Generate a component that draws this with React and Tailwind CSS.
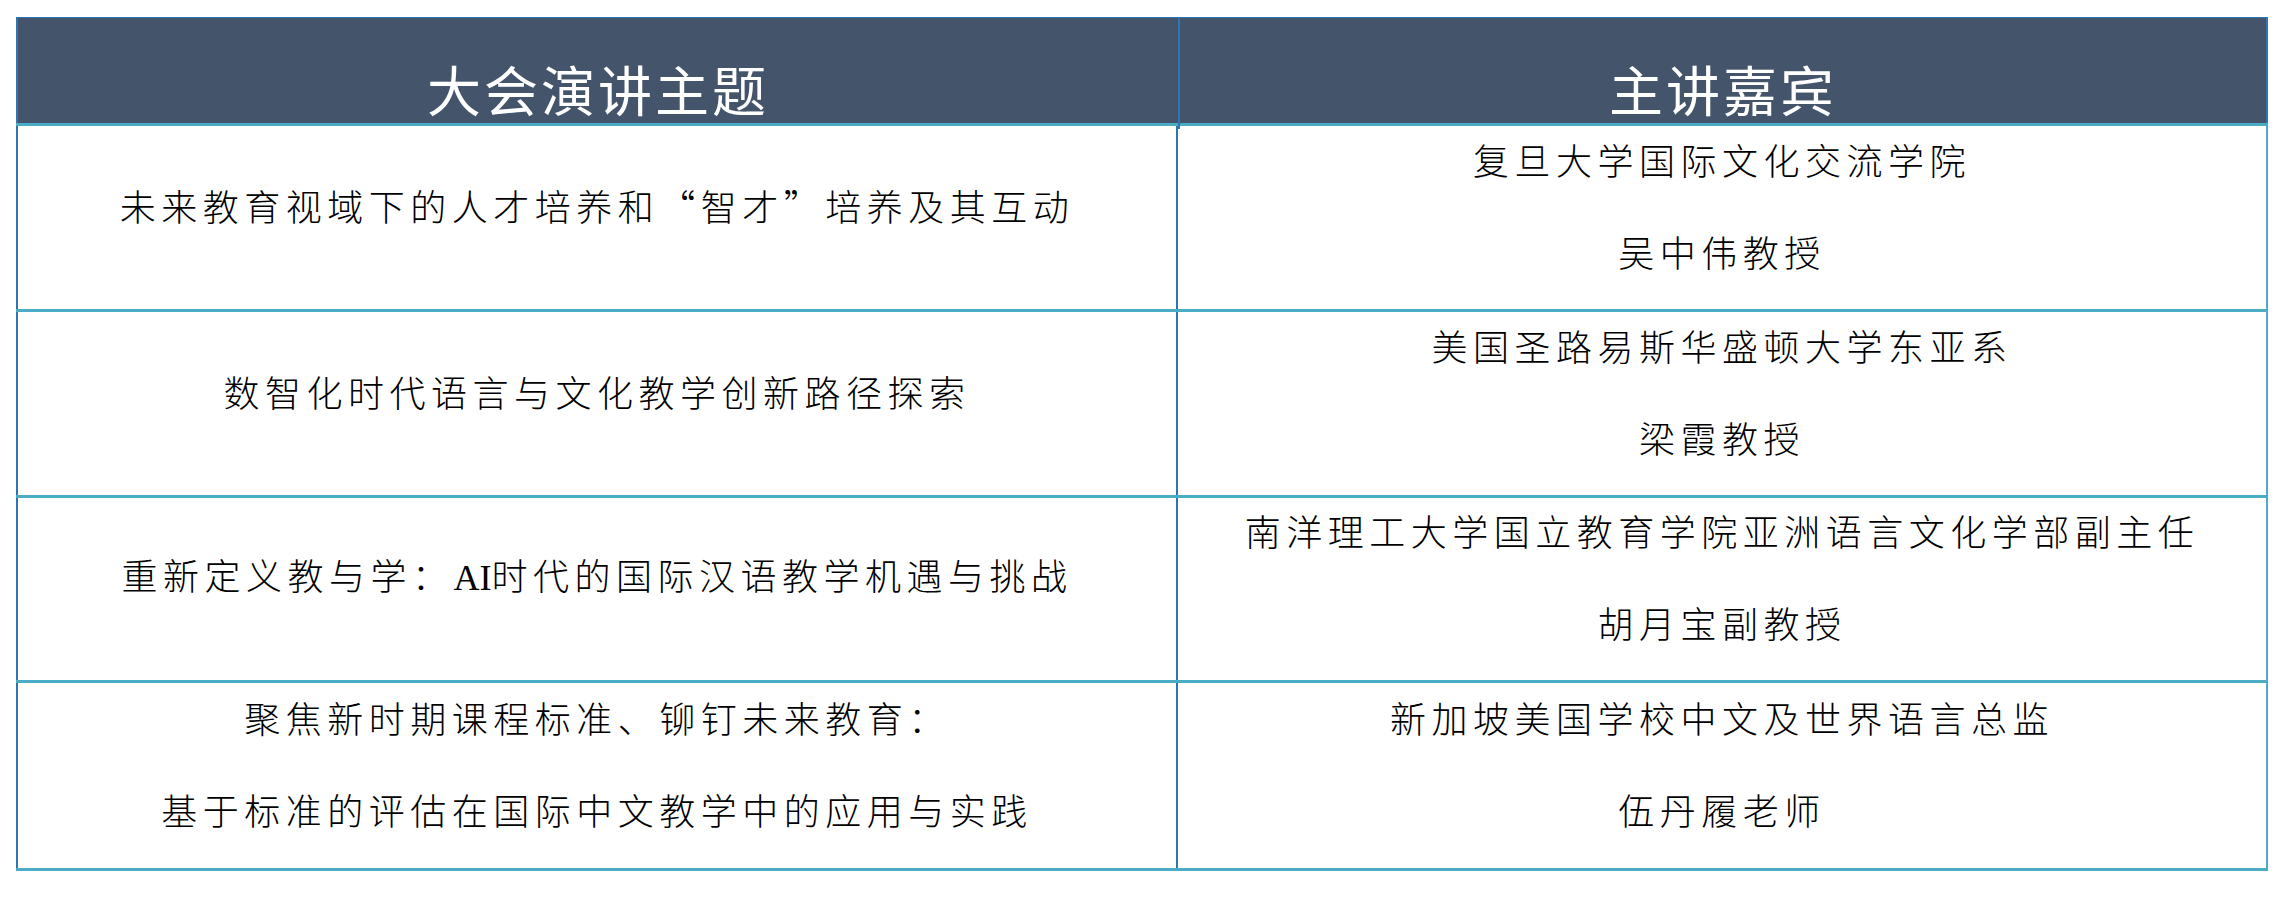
const rows = [
  {
    topic: ["未来教育视域下的人才培养和“智才”培养及其互动"],
    speaker: ["复旦大学国际文化交流学院", "吴中伟教授"],
    h: "h-[186px]",
  },
  {
    topic: ["数智化时代语言与文化教学创新路径探索"],
    speaker: ["美国圣路易斯华盛顿大学东亚系", "梁霞教授"],
    h: "h-[186px]",
  },
  {
    topic: [
      <>
        重新定义教与学：
        <span className="tracking-normal" style={{ fontFamily: '"Liberation Serif", serif' }}>
          AI
        </span>
        时代的国际汉语教学机遇与挑战
      </>,
    ],
    speaker: ["南洋理工大学国立教育学院亚洲语言文化学部副主任", "胡月宝副教授"],
    h: "h-[185px]",
  },
  {
    topic: ["聚焦新时期课程标准、铆钉未来教育：", "基于标准的评估在国际中文教学中的应用与实践"],
    speaker: ["新加坡美国学校中文及世界语言总监", "伍丹履老师"],
    h: "h-[191px]",
  },
];

const Cell = ({ lines, className = "" }) => (
  <div className={`min-h-0 flex flex-col items-center justify-center pb-[26px] ${className}`}>
    {lines.map((l, i) => (
      <p key={i} className="shrink-0 leading-[92px] whitespace-nowrap tracking-[5.5px]">
        {l}
      </p>
    ))}
  </div>
);

export default function App() {
  return (
    <div
      className="min-h-[908px] bg-white pt-[17px] pl-[16px] text-black"
      style={{ fontFamily: '"Noto Sans CJK SC", "Liberation Serif", serif' }}
    >
      <div className="w-[2252px]">
        {/* header */}
        <div className="grid grid-cols-[1162px_1fr] h-[106px] bg-[#44546a] border-t border-l-2 border-r-2 border-[#2e75b6] text-white text-[54px] tracking-[3px]">
          <div className="flex items-center justify-center pt-[30px] border-r-2 border-[#2e75b6]">
            大会演讲主题
          </div>
          <div className="flex items-center justify-center pt-[30px]">主讲嘉宾</div>
        </div>

        {/* body rows */}
        {rows.map((r, i) => (
          <div
            key={i}
            className={`grid grid-cols-[1162px_1fr] grid-rows-1 ${r.h} border-t-[3px] border-[#4bacc6] border-r-2 ${
              i === rows.length - 1 ? "border-b-[3px]" : ""
            } text-[36px] font-light`}
          >
            <Cell lines={r.topic} className="border-l-2 border-r-2 border-[#2e75b6]" />
            <Cell lines={r.speaker} />
          </div>
        ))}
      </div>
    </div>
  );
}
